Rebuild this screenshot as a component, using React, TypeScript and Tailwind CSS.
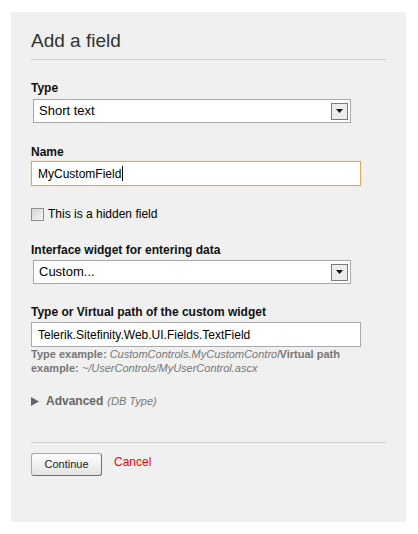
const font = { fontFamily: '"Liberation Sans", Arial, sans-serif' };

function SelectBox({ value }: { value: string }) {
  return (
    <div className="ml-[2px] flex h-[24px] w-[318px] items-center justify-between border border-[#a9a9a9] bg-white pl-[5px] pr-[2px]">
      <span className="text-[13px] leading-[16px] text-black">{value}</span>
      <div className="flex h-[17px] w-[17px] items-center justify-center border border-[#7a7a7a] bg-[#ececec]">
        <svg width="7" height="4" viewBox="0 0 7 4">
          <path d="M0 0h7L3.5 4z" fill="#111" />
        </svg>
      </div>
    </div>
  );
}

function Label({ children }: { children: React.ReactNode }) {
  return <div className="text-[12px] font-bold leading-[14px] text-[#111]">{children}</div>;
}

export default function App() {
  return (
    <div className="min-h-[534px] bg-white pt-[12px] pl-[11px]" style={font}>
      <div className="flex h-[510px] w-[395px] flex-col bg-[#f0f0f0] px-[20px] pt-[18px]">
        <h1 className="text-[19px] leading-[22px] text-[#333]">Add a field</h1>
        <div className="mt-[7px] border-t border-[#cfcfcf]" />

        <div className="mt-[21px]">
          <Label>Type</Label>
        </div>
        <div className="mt-[4px]">
          <SelectBox value="Short text" />
        </div>

        <div className="mt-[22px]">
          <Label>Name</Label>
        </div>
        <div className="mt-[2px] flex h-[25px] w-[330px] items-center border border-[#e2aa52] bg-white pl-[6px] shadow-[0_0_1px_#f0c070]">
          <span className="text-[12px] leading-[14px] text-black">MyCustomField</span>
          <span className="ml-px h-[15px] w-px bg-black" />
        </div>

        <label className="mt-[21px] flex items-center gap-[4px]">
          <span className="h-[13px] w-[13px] border border-[#8f8f8f] bg-gradient-to-br from-[#d4d4d4] to-[#f8f8f8]" />
          <span className="text-[12px] leading-[14px] text-black">This is a hidden field</span>
        </label>

        <div className="mt-[22px]">
          <Label>Interface widget for entering data</Label>
        </div>
        <div className="mt-[3px]">
          <SelectBox value="Custom..." />
        </div>

        <div className="mt-[21px]">
          <Label>Type or Virtual path of the custom widget</Label>
        </div>
        <div className="mt-[3px] flex h-[25px] w-[330px] items-center border border-[#a9a9a9] bg-white pl-[6px]">
          <span className="text-[12px] leading-[14px] text-black">Telerik.Sitefinity.Web.UI.Fields.TextField</span>
        </div>
        <p className="w-[330px] text-[11px] leading-[14px] text-[#777]">
          <b>Type example: </b>
          <i>CustomControls.MyCustomControl</i>
          <b>Virtual path example: </b>
          <i>~/UserControls/MyUserControl.ascx</i>
        </p>

        <div className="mt-[19px] flex items-center gap-[7px]">
          <svg width="8" height="9" viewBox="0 0 8 9">
            <path d="M0 0L8 4.5L0 9z" fill="#666" />
          </svg>
          <span className="text-[12px] font-bold leading-[14px] text-[#666]">Advanced</span>
          <i className="-ml-[3px] text-[11px] leading-[14px] text-[#777]">(DB Type)</i>
        </div>

        <div className="mt-[34px] border-t border-[#cfcfcf]" />

        <div className="mt-[10px] flex items-start gap-[12px]">
          <button className="h-[23px] w-[71px] rounded-[3px] border border-[#a8a8a8] border-r-[#6f6f6f] border-b-[#6f6f6f] bg-gradient-to-b from-[#fdfdfd] to-[#e4e4e4] text-[11px] text-[#222]">
            Continue
          </button>
          <a className="mt-[2px] text-[12px] leading-[14px] text-[#f00]">Cancel</a>
        </div>
      </div>
    </div>
  );
}
